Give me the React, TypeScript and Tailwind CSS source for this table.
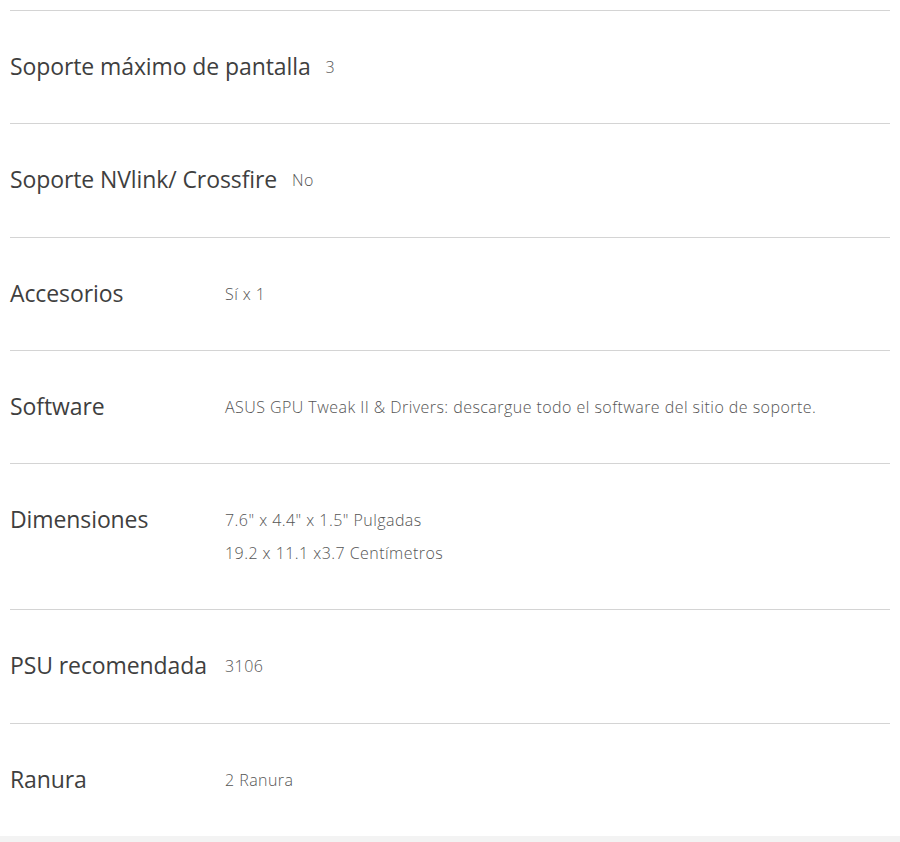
import React from 'react';

type Spec = { label: string; values: string[] };

const SPECS: Spec[] = [
  { label: 'Soporte máximo de pantalla', values: ['3'] },
  { label: 'Soporte NVlink/ Crossfire', values: ['No'] },
  { label: 'Accesorios', values: ['Sí x 1'] },
  { label: 'Software', values: ['ASUS GPU Tweak II & Drivers: descargue todo el software del sitio de soporte.'] },
  { label: 'Dimensiones', values: ['7.6" x 4.4" x 1.5" Pulgadas', '19.2 x 11.1 x3.7 Centímetros'] },
  { label: 'PSU recomendada', values: ['3106'] },
  { label: 'Ranura', values: ['2 Ranura'] },
];

const App: React.FC = () => {
  return (
    <div className="w-[900px] min-h-[842px] bg-white flex flex-col" style={{ fontFamily: '"Open Sans", "Noto Sans", sans-serif' }}>
      <div className="px-[10px] pt-[10px]">
        <ul className="flex flex-col">
          {SPECS.map(s => (
            <li key={s.label} className="flex flex-row items-start border-t border-[#d4d4d4] pt-10 pb-[40.3px]">
              <div className="min-w-[200px] mr-[15px] text-[23px] leading-[30px] mb-[2px] text-[#3f3f3f] tracking-[-0.1px]">{s.label}</div>
              <div className="flex flex-col gap-px text-[16px] leading-8 text-[#555555] font-light tracking-[0.45px]">
                {s.values.map(v => (
                  <span key={v}>{v}</span>
                ))}
              </div>
            </li>
          ))}
        </ul>
      </div>
      <div className="flex-1 bg-[#f3f3f3]" />
    </div>
  );
};

export default App;
